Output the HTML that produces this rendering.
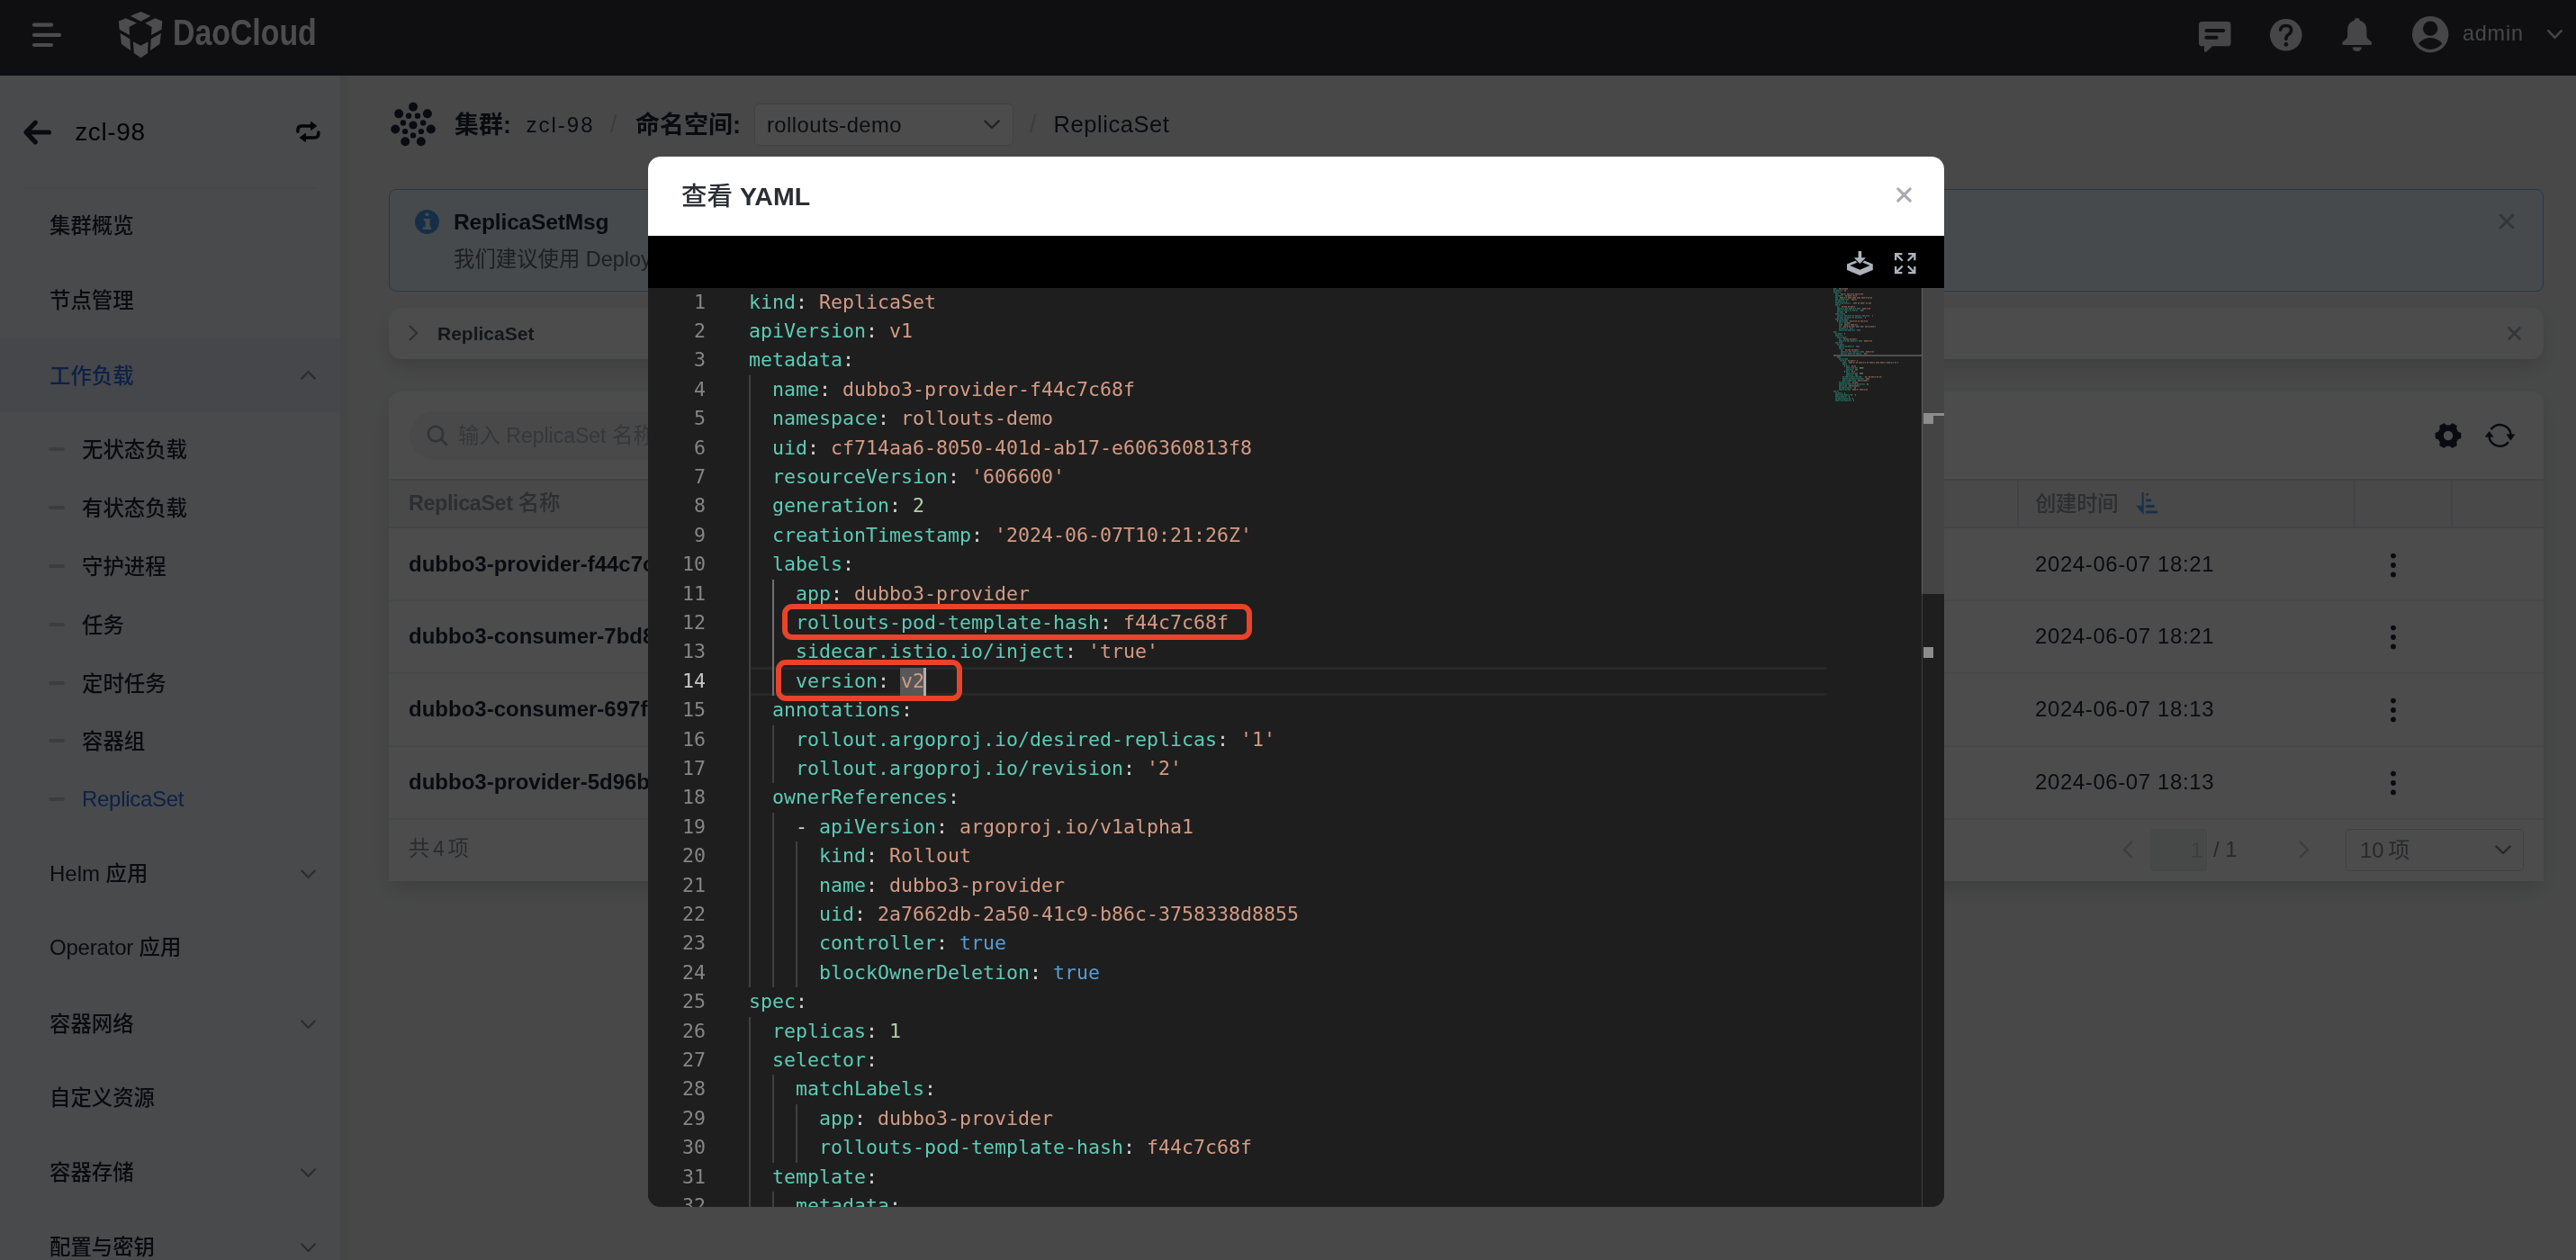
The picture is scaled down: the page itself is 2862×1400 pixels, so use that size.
<!DOCTYPE html>
<html lang="zh-CN">
<head>
<meta charset="utf-8">
<title>ReplicaSet - 查看 YAML</title>
<style>
*{box-sizing:border-box;margin:0;padding:0}
html,body{width:2862px;height:1400px;overflow:hidden;background:#f2f4f7}
body{position:relative;font-family:"Liberation Sans","Noto Sans CJK SC",sans-serif;color:#1f2738;-webkit-font-smoothing:antialiased}
.abs{position:absolute}
.t{position:absolute;white-space:nowrap;line-height:1;transform:translateY(-50%)}
svg{position:absolute;overflow:visible}
/* header */
#hdr{will-change:transform;position:absolute;left:0;top:0;width:2862px;height:84px;background:#32353f}
/* sidebar */
#side{will-change:transform;position:absolute;left:0;top:84px;width:378px;height:1316px;background:#f4f7fc;box-shadow:2px 0 10px rgba(0,0,0,.10)}
#main{will-change:transform;position:absolute;left:378px;top:84px;width:2484px;height:1316px;background:#f0f1f2}
.mi{position:absolute;left:55px;font-size:23.4px;font-weight:500;margin-top:1.5px;white-space:nowrap;line-height:1;transform:translateY(-50%);color:#1f2738}
.si{position:absolute;left:91px;font-size:23.4px;font-weight:500;margin-top:1.5px;white-space:nowrap;line-height:1;transform:translateY(-50%);color:#1f2738}
.dash{position:absolute;left:54px;width:18px;height:4px;border-radius:2px;background:#c9cdd4;transform:translateY(-50%)}
.card{position:absolute;background:#fff;border-radius:14px;box-shadow:0 10px 22px -3px rgba(0,0,0,.15)}
.hl{position:absolute;height:1.6px;background:#e2e4e9}
.hl.r{background:#eff0f2}
.vl{position:absolute;width:1.6px;background:#e0e2e7}
.rt{position:absolute;white-space:nowrap;line-height:1;transform:translateY(-50%);font-size:23.4px}
#ov{position:absolute;left:0;top:0;width:2862px;height:1400px;background:rgba(0,0,0,.7)}
/* modal */
#modal{position:absolute;left:720px;top:174px;width:1440px;height:1167px;border-radius:14px;overflow:hidden;background:#1e1e1e}
#mtitle{will-change:transform;position:absolute;left:0;top:0;width:1440px;height:88px;background:#fff}
#mtool{position:absolute;left:0;top:88px;width:1440px;height:58px;background:#000}
#ed{will-change:transform;position:absolute;left:0;top:146px;width:1440px;height:1021px;background:#1e1e1e;overflow:hidden;font-family:"DejaVu Sans Mono","Liberation Mono",monospace;font-size:21.6px;line-height:32.4px}
.ln{position:absolute;left:0;width:64px;text-align:right;color:#858585;height:32.4px;white-space:pre}
.ln.act{color:#c6c6c6}
.cl{position:absolute;left:112px;height:32.4px;white-space:pre;color:#d4d4d4}
.k{color:#5ccbb5}.s{color:#d39a83}.n{color:#b5cea8}.b{color:#569cd6}
.g{position:absolute;width:1.5px;background:#404040}
.g.a{background:#707070}
</style>
</head>
<body>
<div id="hdr">
  <svg style="left:36px;top:24px" width="34" height="30" viewBox="0 0 34 30"><g stroke="#fff" stroke-width="4.2" stroke-linecap="round"><path d="M2 3.7H21"/><path d="M2 14.9H30"/><path d="M2 26H21"/></g></svg>
  <svg style="left:125px;top:5px" width="65" height="67" viewBox="0 0 65 67"><g fill="#fff">
    <path d="M31.4 7.9L42.6 12.8L31.4 18.7L19.8 12.8Z"/>
    <path d="M6.9 18.4L14.9 15.2L26.9 20.5L18.6 24.9L19 34L7.7 27.7Z"/>
    <path d="M55.3 18.4L47.3 15.2L36.2 20.7L43.6 25L43.1 34L54.5 27.7Z"/>
    <path d="M8.5 31.9L19.4 38.2L20.1 51.1L10 43.9Z"/>
    <path d="M22.9 41.2L31.4 45.7L39.6 41.2L39.1 54L31.4 59.3L23.9 54Z"/>
    <path d="M54 31.9L42.8 38.2L42 51.1L52.4 43.9Z"/>
  </g></svg>
  <div class="t" id="logo" style="left:192px;top:36.6px;font-size:39.8px;font-weight:700;color:#fff;transform-origin:0 50%;transform:translateY(-50%) scaleX(.85)">DaoCloud</div>
  <!-- right icons -->
  <svg style="left:2442.8px;top:24px" width="35.5" height="33.8" viewBox="0 0 35.5 33.8"><path fill="#e9ebf0" d="M3.4 0H32.1Q35.5 0 35.5 3.4V23.9Q35.5 27.3 32.1 27.3H15.2L8.6 33.2Q6 34.6 5.9 32V27.3H3.4Q0 27.3 0 23.9V3.4Q0 0 3.4 0Z"/><g stroke="#32353f" stroke-width="4" stroke-linecap="round"><path d="M8.4 9.9H27.2"/><path d="M8.4 17.7H19.6"/></g></svg>
  <svg style="left:2522px;top:20.7px" width="35.6" height="35.6" viewBox="0 0 35.6 35.6"><circle cx="17.8" cy="17.8" r="17.8" fill="#e9ebf0"/><path d="M11.6 12.2Q12.6 7.6 17.9 7.6Q23.6 7.6 23.6 12.6Q23.6 15.4 20.6 17.4Q17.8 19.2 17.8 22.6" fill="none" stroke="#32353f" stroke-width="3.5" stroke-linecap="round"/><circle cx="17.9" cy="28.3" r="2.4" fill="#32353f"/></svg>
  <svg style="left:2602.4px;top:20.2px" width="33.5" height="37.3" viewBox="0 0 35 38" preserveAspectRatio="none"><path fill="#e9ebf0" d="M17.5 0Q20.4 0 20.7 2.9Q28.6 5.2 28.6 14V20.5Q28.6 23.6 33.6 26.6Q35.2 27.8 34.6 29.4Q34.1 30.6 32.6 30.6H2.4Q.9 30.6 .4 29.4Q-.2 27.8 1.4 26.6Q6.4 23.6 6.4 20.5V14Q6.4 5.2 14.3 2.9Q14.6 0 17.5 0Z"/><path fill="#e9ebf0" d="M12 33.2H23Q22 37.8 17.5 37.8Q13 37.8 12 33.2Z"/></svg>
  <svg style="left:2679.8px;top:17.9px" width="40.4" height="40.4" viewBox="0 0 40.4 40.4"><defs><clipPath id="avc"><circle cx="20.2" cy="20.2" r="16.7"/></clipPath></defs><circle cx="20.2" cy="20.2" r="20.2" fill="#e9ebf0"/><circle cx="20.2" cy="13.6" r="8.2" fill="#32353f"/><circle cx="20.2" cy="41.1" r="17" fill="#32353f" clip-path="url(#avc)"/></svg>
  <div class="t" id="admin" style="left:2736px;top:38px;font-size:23.4px;color:#e9ebf0;letter-spacing:.8px">admin</div>
  <svg style="left:2830px;top:33px" width="17" height="11" viewBox="0 0 17 11"><path d="M1.2 1.2L8.5 8.8L15.8 1.2" fill="none" stroke="#e9ebf0" stroke-width="2.4" stroke-linecap="round" stroke-linejoin="round"/></svg>
</div>
<div id="side">
  <!-- coordinates inside #side are page y minus 84 -->
  <svg style="left:26px;top:48.75px" width="31" height="28" viewBox="0 0 31 28"><path d="M13.3 3.2L2.9 14L13.3 24.9M3.4 14H28.4" fill="none" stroke="#1f2738" stroke-width="5.2" stroke-linecap="round" stroke-linejoin="round"/></svg>
  <div class="t" id="sb-title" style="left:83.2px;top:63px;font-size:28px;letter-spacing:.65px;color:#0c0d10">zcl-98</div>
  <svg style="left:328.6px;top:51.2px" width="27" height="24" viewBox="0 0 27 24"><g fill="none" stroke="#111" stroke-width="3.5" stroke-linecap="round" stroke-linejoin="round"><path d="M1.9 11.2V9.4Q1.9 4.9 6.4 4.9H17"/><path d="M24.8 11.9V13.4Q24.8 17.9 20.3 17.9H10"/></g><path fill="#111" stroke="#111" stroke-width="1" stroke-linejoin="round" d="M16.6 .4L22.8 4.9L16.6 9.5Z M10.4 13.3L4.2 17.9L10.4 22.5Z"/></svg>
  <div class="hl" style="left:27px;top:124px;width:324px;background:#e9ebef"></div>
  <div class="mi" style="top:166px">集群概览</div>
  <div class="mi" style="top:249px">节点管理</div>
  <div class="abs" style="left:0;top:292px;width:378px;height:82px;background:#e9edf7"></div>
  <div class="mi" style="top:333px;color:#2a70ef">工作负载</div>
  <svg style="left:334px;top:327px" width="17" height="11" viewBox="0 0 17 11"><path d="M1.2 9.6L8.5 2L15.8 9.6" fill="none" stroke="#8d939d" stroke-width="2.2" stroke-linecap="round" stroke-linejoin="round"/></svg>
  <div class="dash" style="top:415px"></div><div class="si" style="top:415px">无状态负载</div>
  <div class="dash" style="top:480px"></div><div class="si" style="top:480px">有状态负载</div>
  <div class="dash" style="top:545px"></div><div class="si" style="top:545px">守护进程</div>
  <div class="dash" style="top:610px"></div><div class="si" style="top:610px">任务</div>
  <div class="dash" style="top:675px"></div><div class="si" style="top:675px">定时任务</div>
  <div class="dash" style="top:739px"></div><div class="si" style="top:739px">容器组</div>
  <div class="dash" style="top:804px"></div><div class="si" id="sb-rs" style="margin-top:0;top:803.6px;color:#2a70ef;font-size:24px;letter-spacing:-.3px">ReplicaSet</div>
  <div class="mi" id="sb-helm" style="top:885px"><span style="font-size:24px;letter-spacing:0px">Helm</span> 应用</div>
  <svg style="left:334px;top:882px" width="17" height="11" viewBox="0 0 17 11"><path d="M1.2 1.4L8.5 9L15.8 1.4" fill="none" stroke="#8d939d" stroke-width="2.2" stroke-linecap="round" stroke-linejoin="round"/></svg>
  <div class="mi" id="sb-op" style="top:967.5px"><span style="font-size:24px;letter-spacing:-.2px">Operator</span> 应用</div>
  <div class="mi" style="top:1053px">容器网络</div>
  <svg style="left:334px;top:1048.5px" width="17" height="11" viewBox="0 0 17 11"><path d="M1.2 1.4L8.5 9L15.8 1.4" fill="none" stroke="#8d939d" stroke-width="2.2" stroke-linecap="round" stroke-linejoin="round"/></svg>
  <div class="mi" style="top:1135px">自定义资源</div>
  <div class="mi" style="top:1218px">容器存储</div>
  <svg style="left:334px;top:1213.5px" width="17" height="11" viewBox="0 0 17 11"><path d="M1.2 1.4L8.5 9L15.8 1.4" fill="none" stroke="#8d939d" stroke-width="2.2" stroke-linecap="round" stroke-linejoin="round"/></svg>
  <div class="mi" style="top:1301px">配置与密钥</div>
  <svg style="left:334px;top:1296.5px" width="17" height="11" viewBox="0 0 17 11"><path d="M1.2 1.4L8.5 9L15.8 1.4" fill="none" stroke="#8d939d" stroke-width="2.2" stroke-linecap="round" stroke-linejoin="round"/></svg>
</div>
<div id="main">
  <div class="abs" style="left:0;top:0;width:14px;height:1316px;background:linear-gradient(90deg,rgba(0,0,0,.05),rgba(0,0,0,0))"></div>
  <!-- breadcrumb -->
  <svg id="clu" style="left:55.9px;top:29.6px" width="50" height="50" viewBox="-25 -25 50 50"><g fill="#1f2738"><circle r="4.6"/><circle cx="0.00" cy="11.40" r="3.2"/><circle cx="-8.91" cy="7.11" r="3.2"/><circle cx="-11.11" cy="-2.54" r="3.2"/><circle cx="-4.95" cy="-10.27" r="3.2"/><circle cx="4.95" cy="-10.27" r="3.2"/><circle cx="11.11" cy="-2.54" r="3.2"/><circle cx="8.91" cy="7.11" r="3.2"/><circle cx="0.00" cy="-20.30" r="5"/><circle cx="15.87" cy="-12.66" r="5"/><circle cx="19.79" cy="4.52" r="5"/><circle cx="8.81" cy="18.29" r="5"/><circle cx="-8.81" cy="18.29" r="5"/><circle cx="-19.79" cy="4.52" r="5"/><circle cx="-15.87" cy="-12.66" r="5"/></g></svg>
  <div class="t" id="bc1" style="left:127px;top:55.2px;font-size:27px;font-weight:700">集群:</div>
  <div class="t" id="bc2" style="left:206.5px;top:54.6px;font-size:24px;letter-spacing:2px">zcl-98</div>
  <div class="t" style="left:300px;top:54px;font-size:27px;color:#c8c9cf">/</div>
  <div class="t" id="bc3" style="left:328px;top:55.2px;font-size:27px;font-weight:700">命名空间:</div>
  <div class="abs" style="left:460px;top:31px;width:288px;height:47px;border:1.8px solid #d2d6de;border-radius:5px;background:#fff"></div>
  <div class="t" id="bc4" style="left:474px;top:55px;font-size:23.8px;letter-spacing:.45px;color:#2a2f38">rollouts-demo</div>
  <svg style="left:715px;top:49px" width="18" height="11" viewBox="0 0 18 11"><path d="M1.2 1.4L9 9L16.8 1.4" fill="none" stroke="#6b717c" stroke-width="2.2" stroke-linecap="round" stroke-linejoin="round"/></svg>
  <div class="t" style="left:766px;top:54px;font-size:27px;color:#c8c9cf">/</div>
  <div class="t" id="bc5" style="left:792.5px;top:54.9px;font-size:25.5px;letter-spacing:.57px">ReplicaSet</div>

  <!-- alert -->
  <div class="abs" style="left:54px;top:126px;width:2394px;height:114px;border:1.6px solid #8ab8ee;border-radius:8px;background:#ecf7fd"></div>
  <svg style="left:82.9px;top:148.9px" width="27" height="27" viewBox="-13.5 -13.5 27 27"><circle r="13.45" fill="#4a9ff5"/><g fill="#ecf7fd"><circle cx="0" cy="-8.15" r="1.9"/><path d="M-3.7 -3.6H3V5.65H4.5V8.4H-4.6V5.65H-1.85V-.9H-3.7Z"/></g></svg>
  <div class="t" id="al1" style="left:126px;top:163px;font-size:24.6px;font-weight:700;letter-spacing:-.2px;color:#1f2738">ReplicaSetMsg</div>
  <div class="t" id="al2" style="left:126px;top:204.5px;font-size:23.4px;color:#64676e">我们建议使用 Deployment 来自动管理 ReplicaSet，除非您需要自定义更新业务流程或根本不需要更新。</div>
  <svg style="left:2398px;top:153px" width="18" height="18" viewBox="0 0 18 18"><path d="M2 2L16 16M16 2L2 16" stroke="#aeb3be" stroke-width="3" stroke-linecap="round"/></svg>

  <!-- collapsed card -->
  <div class="card" style="left:54px;top:258px;width:2394px;height:57px"></div>
  <svg style="left:76px;top:277px" width="11" height="18" viewBox="0 0 11 18"><path d="M1.5 1.5L9.2 9L1.5 16.5" fill="none" stroke="#9a9fa8" stroke-width="2.1" stroke-linecap="round" stroke-linejoin="round"/></svg>
  <div class="t" id="cc1" style="left:108px;top:286px;font-size:21px;font-weight:700;letter-spacing:0;color:#474c55">ReplicaSet</div>
  <svg style="left:2408px;top:279px" width="15" height="15" viewBox="0 0 15 15"><path d="M1.6 1.6L13.4 13.4M13.4 1.6L1.6 13.4" stroke="#aeb3be" stroke-width="2.8" stroke-linecap="round"/></svg>

  <!-- table card -->
  <div class="card" style="left:54px;top:351px;width:2394px;height:544px;border-radius:14px 14px 0 0"></div>
  <div class="abs" style="left:76.7px;top:373.2px;width:560px;height:54px;border-radius:27px;background:#f3f5f8"></div>
  <svg style="left:96px;top:388px" width="24" height="24" viewBox="0 0 24 24"><circle cx="10" cy="10" r="8.2" fill="none" stroke="#a6abb4" stroke-width="2.6"/><path d="M16 16L22 22" stroke="#a6abb4" stroke-width="2.8" stroke-linecap="round"/></svg>
  <div class="t" id="sp" style="left:131px;top:401px;font-size:23.4px;color:#b4b8c0;letter-spacing:0">输入 <span id="spl" style="font-size:23px">ReplicaSet</span> 名称搜索</div>
  <svg id="gear" style="left:2326.5px;top:385px" width="30" height="30" viewBox="-15 -15 30 30"><path fill="#1f2738" stroke="#1f2738" stroke-width="1.8" stroke-linejoin="round" fill-rule="evenodd" d="M10.31,-3.55 L13.47,-2.50 L13.47,2.50 L10.31,3.55 A10.9,10.9 0 0 1 8.23,7.15 L8.23,7.15 L8.90,10.42 L4.57,12.91 L2.08,10.70 A10.9,10.9 0 0 1 -2.08,10.70 L-2.08,10.70 L-4.57,12.91 L-8.90,10.42 L-8.23,7.15 A10.9,10.9 0 0 1 -10.31,3.55 L-10.31,3.55 L-13.47,2.50 L-13.47,-2.50 L-10.31,-3.55 A10.9,10.9 0 0 1 -8.23,-7.15 L-8.23,-7.15 L-8.90,-10.42 L-4.57,-12.91 L-2.08,-10.70 A10.9,10.9 0 0 1 2.08,-10.70 L2.08,-10.70 L4.57,-12.91 L8.90,-10.42 L8.23,-7.15 A10.9,10.9 0 0 1 10.31,-3.55 Z M0,-6.1 A6.1,6.1 0 1 0 0,6.1 A6.1,6.1 0 1 0 0,-6.1Z"/></svg>
  <svg id="refr" style="left:2382.9px;top:384.6px" width="33" height="30" viewBox="-16.5 -15 33 30"><g fill="none" stroke="#1f2738" stroke-width="2.5" stroke-linecap="round"><path d="M-9.3,-7.6 A12.1,12.1 0 0 1 12.05,-1"/><path d="M8.8,7.9 A12.1,12.1 0 0 1 -12.05,1.2"/></g><path fill="#1f2738" stroke="#1f2738" stroke-width=".8" stroke-linejoin="round" d="M7.6,-1.2 L16.2,-1.2 L11.9,5.2Z M-16.2,1.2 L-7.6,1.2 L-11.9,-4.6Z"/></svg>
  <div class="abs" style="left:54px;top:449px;width:2394px;height:53px;background:#f6f6f7"></div>
  <div class="hl" style="left:54px;top:448px;width:2394px"></div>
  <div class="hl" style="left:54px;top:501px;width:2394px"></div>
  <div class="hl r" style="left:54px;top:582px;width:2394px"></div>
  <div class="hl r" style="left:54px;top:663px;width:2394px"></div>
  <div class="hl r" style="left:54px;top:744px;width:2394px"></div>
  <div class="hl r" style="left:54px;top:825px;width:2394px"></div>
  <div class="vl" style="left:1863px;top:449px;height:53px"></div>
  <div class="vl" style="left:2237px;top:449px;height:53px"></div>
  <div class="vl" style="left:2345px;top:449px;height:53px"></div>
  <div class="rt" id="th1" style="left:76px;top:476px;color:#9499a2;font-weight:700;letter-spacing:-.4px">ReplicaSet <span style="font-weight:500;letter-spacing:0">名称</span></div>
  <div class="rt" id="th2" style="left:1883px;top:476.5px;color:#9499a2;font-weight:500;letter-spacing:-.3px">创建时间</div>
  <svg style="left:1994px;top:462px" width="26" height="27" viewBox="0 0 26 27"><g fill="#4da3fa"><path d="M7.6 1H9.7V26L1 15.8H7.6Z"/><circle cx="13.6" cy="3.4" r="1.45"/><rect x="11.8" y="8.5" width="6.7" height="2.8" rx="1.4"/><rect x="11.8" y="15.1" width="10.2" height="2.8" rx="1.4"/><rect x="11.8" y="21.5" width="13.7" height="2.9" rx="1.4"/></g></svg>
  <div class="rt rn" id="rn1" style="left:76px;top:543px;font-weight:700;letter-spacing:0;font-size:24px">dubbo3-provider-f44c7c68f</div>
  <div class="rt rd" id="rd1" style="left:1883px;top:543px;letter-spacing:.6px;font-size:24px">2024-06-07 18:21</div>
  <svg style="left:2277px;top:530px" width="8" height="28" viewBox="0 0 8 28"><g fill="#1f2738"><circle cx="4" cy="3.6" r="2.9"/><circle cx="4" cy="14" r="2.9"/><circle cx="4" cy="24.4" r="2.9"/></g></svg>
  <div class="rt rn" style="left:76px;top:623px;font-weight:700;letter-spacing:0;font-size:24px">dubbo3-consumer-7bd8f5d9c4</div>
  <div class="rt rd" style="left:1883px;top:623px;letter-spacing:.6px;font-size:24px">2024-06-07 18:21</div>
  <svg style="left:2277px;top:610px" width="8" height="28" viewBox="0 0 8 28"><g fill="#1f2738"><circle cx="4" cy="3.6" r="2.9"/><circle cx="4" cy="14" r="2.9"/><circle cx="4" cy="24.4" r="2.9"/></g></svg>
  <div class="rt rn" style="left:76px;top:704px;font-weight:700;letter-spacing:0;font-size:24px">dubbo3-consumer-697fb8c6b7</div>
  <div class="rt rd" style="left:1883px;top:704px;letter-spacing:.6px;font-size:24px">2024-06-07 18:13</div>
  <svg style="left:2277px;top:691px" width="8" height="28" viewBox="0 0 8 28"><g fill="#1f2738"><circle cx="4" cy="3.6" r="2.9"/><circle cx="4" cy="14" r="2.9"/><circle cx="4" cy="24.4" r="2.9"/></g></svg>
  <div class="rt rn" style="left:76px;top:785px;font-weight:700;letter-spacing:0;font-size:24px">dubbo3-provider-5d96bf4c9d</div>
  <div class="rt rd" style="left:1883px;top:785px;letter-spacing:.6px;font-size:24px">2024-06-07 18:13</div>
  <svg style="left:2277px;top:772px" width="8" height="28" viewBox="0 0 8 28"><g fill="#1f2738"><circle cx="4" cy="3.6" r="2.9"/><circle cx="4" cy="14" r="2.9"/><circle cx="4" cy="24.4" r="2.9"/></g></svg>
  <div class="rt" id="ft1" style="left:76px;top:860px;color:#8d939d;letter-spacing:0;word-spacing:-3px">共 4 项</div>
  <svg style="left:1980px;top:850px" width="12" height="20" viewBox="0 0 12 20"><path d="M10.3 1.6L2 10L10.3 18.4" fill="none" stroke="#c4c8cf" stroke-width="2.3" stroke-linecap="round" stroke-linejoin="round"/></svg>
  <div class="abs" style="left:2011px;top:837px;width:63px;height:46.5px;border-radius:5px;background:#eff0f2;border:1.6px solid #e5e7ea"></div>
  <div class="rt" style="left:2056px;top:861px;color:#c8ccd2;font-size:24px">1</div>
  <div class="rt" id="ft2" style="left:2081px;top:860px;color:#868a91;font-size:24px;letter-spacing:0">/ 1</div>
  <svg style="left:2176px;top:850px" width="12" height="20" viewBox="0 0 12 20"><path d="M1.7 1.6L10 10L1.7 18.4" fill="none" stroke="#c4c8cf" stroke-width="2.3" stroke-linecap="round" stroke-linejoin="round"/></svg>
  <div class="abs" style="left:2228px;top:837px;width:198px;height:47px;border:1.8px solid #d5d8de;border-radius:5px;background:#fff"></div>
  <div class="rt" id="ft3" style="left:2244px;top:861px;color:#868a91;font-size:24px;letter-spacing:0;word-spacing:-2px">10 项</div>
  <svg style="left:2394px;top:855px" width="18" height="11" viewBox="0 0 18 11"><path d="M1.3 1.4L9 9L16.7 1.4" fill="none" stroke="#7c8088" stroke-width="2.2" stroke-linecap="round" stroke-linejoin="round"/></svg>
</div>
<div id="ov"></div>
<div id="modal">
 <div id="mtitle"><div class="t" id="mt" style="left:37px;top:44.4px;font-size:28.5px;font-weight:700;color:#2a2d33;letter-spacing:0"><span style="font-weight:500">查看</span> YAML</div>
  <svg style="left:1385.5px;top:33.4px" width="19" height="19" viewBox="0 0 19 19"><path d="M2.8 2.8L16.2 16.2M16.2 2.8L2.8 16.2" stroke="#a6abb5" stroke-width="3.1" stroke-linecap="round"/></svg></div>
 <div id="mtool">
  <svg style="left:1332px;top:17px" width="28.8" height="27.2" viewBox="0 0 28.8 27.2"><path fill="#adb2bc" fill-rule="evenodd" d="M0 14.5L14.4 8.4L28.8 14.5V21.1L14.4 27.1L0 21.1Z M3.3 16.1L14.4 11.4L25.5 16.1L14.4 20.8Z"/><path d="M7.8 7.2H21L14.4 14Z" fill="#adb2bc" stroke="#000" stroke-width="2.3" paint-order="stroke" stroke-linejoin="miter"/><rect x="12.6" y="0" width="3.6" height="8" fill="#adb2bc"/></svg>
  <svg style="left:1385.2px;top:18.8px" width="23.5" height="23.2" viewBox="0 0 23.5 23.5" preserveAspectRatio="none"><g fill="none" stroke="#adb2bc" stroke-width="2.3" stroke-linejoin="miter"><path d="M1.15 8.4V1.15H8.4M1.6 1.6L8.8 8.8"/><path d="M22.35 8.4V1.15H15.1M21.9 1.6L14.7 8.8"/><path d="M1.15 15.1V22.35H8.4M1.6 21.9L8.8 14.7"/><path d="M22.35 15.1V22.35H15.1M21.9 21.9L14.7 14.7"/></g></svg>
 </div>
 <div id="ed">
  <div class="abs" style="left:113px;top:420.8px;width:1196px;height:32.4px;border-top:3.2px solid #282828;border-bottom:3.2px solid #282828"></div>
  <div class="abs" style="left:280.1px;top:421.8px;width:26.0px;height:31.0px;background:#575757"></div>
  <div class="g" style="left:112.0px;top:96.8px;height:680.4px"></div>
  <div class="g" style="left:112.0px;top:809.6px;height:226.8px"></div>
  <div class="g a" style="left:138.0px;top:323.6px;height:129.6px"></div>
  <div class="g" style="left:138.0px;top:485.6px;height:64.8px"></div>
  <div class="g" style="left:138.0px;top:582.8px;height:194.4px"></div>
  <div class="g" style="left:164.0px;top:615.2px;height:162.0px"></div>
  <div class="g" style="left:138.0px;top:874.4px;height:97.2px"></div>
  <div class="g" style="left:164.0px;top:906.8px;height:64.8px"></div>
  <div class="g" style="left:138.0px;top:1004.0px;height:32.4px"></div>
  <div class="ln" style="top:-0.4px">1</div>
  <div class="cl" style="top:-0.4px"><span class="k">kind</span>: <span class="s">ReplicaSet</span></div>
  <div class="ln" style="top:32.0px">2</div>
  <div class="cl" style="top:32.0px"><span class="k">apiVersion</span>: <span class="s">v1</span></div>
  <div class="ln" style="top:64.4px">3</div>
  <div class="cl" style="top:64.4px"><span class="k">metadata</span>:</div>
  <div class="ln" style="top:96.8px">4</div>
  <div class="cl" style="top:96.8px">  <span class="k">name</span>: <span class="s">dubbo3-provider-f44c7c68f</span></div>
  <div class="ln" style="top:129.2px">5</div>
  <div class="cl" style="top:129.2px">  <span class="k">namespace</span>: <span class="s">rollouts-demo</span></div>
  <div class="ln" style="top:161.6px">6</div>
  <div class="cl" style="top:161.6px">  <span class="k">uid</span>: <span class="s">cf714aa6-8050-401d-ab17-e606360813f8</span></div>
  <div class="ln" style="top:194.0px">7</div>
  <div class="cl" style="top:194.0px">  <span class="k">resourceVersion</span>: <span class="s">&#x27;606600&#x27;</span></div>
  <div class="ln" style="top:226.4px">8</div>
  <div class="cl" style="top:226.4px">  <span class="k">generation</span>: <span class="n">2</span></div>
  <div class="ln" style="top:258.8px">9</div>
  <div class="cl" style="top:258.8px">  <span class="k">creationTimestamp</span>: <span class="s">&#x27;2024-06-07T10:21:26Z&#x27;</span></div>
  <div class="ln" style="top:291.2px">10</div>
  <div class="cl" style="top:291.2px">  <span class="k">labels</span>:</div>
  <div class="ln" style="top:323.6px">11</div>
  <div class="cl" style="top:323.6px">    <span class="k">app</span>: <span class="s">dubbo3-provider</span></div>
  <div class="ln" style="top:356.0px">12</div>
  <div class="cl" style="top:356.0px">    <span class="k">rollouts-pod-template-hash</span>: <span class="s">f44c7c68f</span></div>
  <div class="ln" style="top:388.4px">13</div>
  <div class="cl" style="top:388.4px">    <span class="k">sidecar.istio.io/inject</span>: <span class="s">&#x27;true&#x27;</span></div>
  <div class="ln act" style="top:420.8px">14</div>
  <div class="cl" style="top:420.8px">    <span class="k">version</span>: <span class="s">v2</span></div>
  <div class="ln" style="top:453.2px">15</div>
  <div class="cl" style="top:453.2px">  <span class="k">annotations</span>:</div>
  <div class="ln" style="top:485.6px">16</div>
  <div class="cl" style="top:485.6px">    <span class="k">rollout.argoproj.io/desired-replicas</span>: <span class="s">&#x27;1&#x27;</span></div>
  <div class="ln" style="top:518.0px">17</div>
  <div class="cl" style="top:518.0px">    <span class="k">rollout.argoproj.io/revision</span>: <span class="s">&#x27;2&#x27;</span></div>
  <div class="ln" style="top:550.4px">18</div>
  <div class="cl" style="top:550.4px">  <span class="k">ownerReferences</span>:</div>
  <div class="ln" style="top:582.8px">19</div>
  <div class="cl" style="top:582.8px">    - <span class="k">apiVersion</span>: <span class="s">argoproj.io/v1alpha1</span></div>
  <div class="ln" style="top:615.2px">20</div>
  <div class="cl" style="top:615.2px">      <span class="k">kind</span>: <span class="s">Rollout</span></div>
  <div class="ln" style="top:647.6px">21</div>
  <div class="cl" style="top:647.6px">      <span class="k">name</span>: <span class="s">dubbo3-provider</span></div>
  <div class="ln" style="top:680.0px">22</div>
  <div class="cl" style="top:680.0px">      <span class="k">uid</span>: <span class="s">2a7662db-2a50-41c9-b86c-3758338d8855</span></div>
  <div class="ln" style="top:712.4px">23</div>
  <div class="cl" style="top:712.4px">      <span class="k">controller</span>: <span class="b">true</span></div>
  <div class="ln" style="top:744.8px">24</div>
  <div class="cl" style="top:744.8px">      <span class="k">blockOwnerDeletion</span>: <span class="b">true</span></div>
  <div class="ln" style="top:777.2px">25</div>
  <div class="cl" style="top:777.2px"><span class="k">spec</span>:</div>
  <div class="ln" style="top:809.6px">26</div>
  <div class="cl" style="top:809.6px">  <span class="k">replicas</span>: <span class="n">1</span></div>
  <div class="ln" style="top:842.0px">27</div>
  <div class="cl" style="top:842.0px">  <span class="k">selector</span>:</div>
  <div class="ln" style="top:874.4px">28</div>
  <div class="cl" style="top:874.4px">    <span class="k">matchLabels</span>:</div>
  <div class="ln" style="top:906.8px">29</div>
  <div class="cl" style="top:906.8px">      <span class="k">app</span>: <span class="s">dubbo3-provider</span></div>
  <div class="ln" style="top:939.2px">30</div>
  <div class="cl" style="top:939.2px">      <span class="k">rollouts-pod-template-hash</span>: <span class="s">f44c7c68f</span></div>
  <div class="ln" style="top:971.6px">31</div>
  <div class="cl" style="top:971.6px">  <span class="k">template</span>:</div>
  <div class="ln" style="top:1004.0px">32</div>
  <div class="cl" style="top:1004.0px">    <span class="k">metadata</span>:</div>
  <div class="abs" style="left:306.1px;top:421.8px;width:3.4px;height:31.0px;background:#aeafad"></div>
  <div class="abs" style="left:149px;top:350.8px;width:522px;height:40.4px;border:6.2px solid #e8432b;border-radius:11px"></div>
  <div class="abs" style="left:141.5px;top:413.2px;width:207px;height:46px;border:6.2px solid #e8432b;border-radius:11px"></div>
  <svg id="mm" style="left:1317px;top:0" width="98" height="140" viewBox="0 0 98 140" fill="none" stroke-width="1.25"><path stroke="#2d9481" opacity=".74" stroke-dasharray="3 .6 2 .6 4 .6 1 .6" d="M0 0.75h4M2 6.75h4M2 12.75h15M2 18.75h6M4 24.75h7M12 24.75h5M18 24.75h2M21 24.75h6M4 30.75h7M12 30.75h8M21 30.75h2M24 30.75h7M32 30.75h8M6 36.75h10M6 42.75h3M0 48.75h4M4 54.75h11M2 60.75h8M6 66.75h6M8 72.75h7M16 72.75h5M22 72.75h2M25 72.75h6M6 78.75h10M10 84.75h5M14 90.75h8M14 96.75h8M10 102.75h15M6 108.75h9M0 114.75h6M2 120.75h13"/><path stroke="#2d9481" opacity=".74" stroke-dasharray="2 .6 4 .6 1 .6 3 .6 2 .6" d="M0 2.75h10M2 8.75h9M2 14.75h10M4 20.75h3M4 26.75h7M4 32.75h7M12 32.75h8M21 32.75h2M24 32.75h8M6 38.75h4M6 44.75h10M2 50.75h8M6 56.75h3M4 62.75h8M8 68.75h3M8 74.75h7M10 80.75h4M14 86.75h4M14 92.75h4M10 98.75h22M6 104.75h13M6 110.75h15M2 116.75h8M2 122.75h17"/><path stroke="#2d9481" opacity=".74" stroke-dasharray="4 .6 1.4 .6 2.6 .6" d="M0 4.75h8M2 10.75h3M2 16.75h17M4 22.75h8M13 22.75h3M17 22.75h8M26 22.75h4M2 28.75h11M2 34.75h15M6 40.75h4M6 46.75h18M2 52.75h8M6 58.75h8M15 58.75h3M19 58.75h8M28 58.75h4M6 64.75h17M8 70.75h8M17 70.75h3M21 70.75h8M30 70.75h4M4 76.75h4M10 82.75h5M14 88.75h13M14 94.75h13M10 100.75h24M6 106.75h29M6 112.75h13M2 118.75h20M2 124.75h18"/><path stroke="#a8796a" opacity=".74" stroke-dasharray="3 .6 2 .6 4 .6 1 .6" d="M6 0.75h10M8 6.75h6M15 6.75h8M24 6.75h9M20 12.75h6M30 24.75h4M43 30.75h1M18 36.75h8M27 36.75h2M30 36.75h8M11 42.75h8M20 42.75h4M25 42.75h4M30 42.75h4M35 42.75h12M34 72.75h4M24 90.75h3M24 96.75h3M27 102.75h12M17 108.75h12"/><path stroke="#a8796a" opacity=".74" stroke-dasharray="2 .6 4 .6 1 .6 3 .6 2 .6" d="M12 2.75h2M13 8.75h8M22 8.75h4M9 20.75h6M16 20.75h8M13 26.75h2M35 32.75h1M12 38.75h7M11 56.75h6M18 56.75h8M13 68.75h6M20 68.75h8M17 74.75h2M16 80.75h9M26 80.75h1M20 86.75h5M20 92.75h4M35 98.75h3M39 98.75h11M51 98.75h3M21 104.75h6M23 110.75h2"/><path stroke="#a8796a" opacity=".74" stroke-dasharray="4 .6 1.4 .6 2.6 .6" d="M7 10.75h8M16 10.75h4M21 10.75h4M26 10.75h4M31 10.75h12M22 16.75h4M27 16.75h2M30 16.75h5M36 16.75h2M39 16.75h3M32 22.75h9M12 40.75h6M19 40.75h8M34 58.75h9M36 70.75h9M17 82.75h7M25 82.75h2M28 82.75h8M37 82.75h2M40 82.75h6M47 82.75h4M52 82.75h6M59 82.75h8M68 82.75h2M71 82.75h1M36 100.75h4M21 112.75h7M29 112.75h9"/><path stroke="#95a888" opacity=".74" stroke-dasharray="3 .6 2 .6 4 .6 1 .6" d="M17 120.75h1"/><path stroke="#95a888" opacity=".74" stroke-dasharray="2 .6 4 .6 1 .6 3 .6 2 .6" d="M14 14.75h1M12 50.75h1M12 116.75h1M21 122.75h1"/><path stroke="#95a888" opacity=".74" stroke-dasharray="4 .6 1.4 .6 2.6 .6" d="M29 88.75h5M29 94.75h4M37 106.75h2M24 118.75h1M22 124.75h1"/><path stroke="#4a7fb8" opacity=".74" stroke-dasharray="2 .6 4 .6 1 .6 3 .6 2 .6" d="M18 44.75h4"/><path stroke="#4a7fb8" opacity=".74" stroke-dasharray="4 .6 1.4 .6 2.6 .6" d="M26 46.75h4M25 64.75h4"/><path stroke="#aaaaaa" opacity=".74" stroke-dasharray="3 .6 2 .6 4 .6 1 .6" d="M4 36.75h1"/><path stroke="#aaaaaa" opacity=".74" stroke-dasharray="2 .6 4 .6 1 .6 3 .6 2 .6" d="M8 80.75h1M12 86.75h1M12 92.75h1"/></svg>
  <div class="abs" style="left:1317px;top:74px;width:98px;height:2px;background:#4f4f4f"></div>
  <div class="abs" style="left:1415px;top:0;width:25px;height:1021px;background:#1e1e1e;border-left:1.4px solid #3c3c3c"></div>
  <div class="abs" style="left:1415px;top:0;width:25px;height:340px;background:#444;border-left:1.4px solid #5e5e5e"></div>
  <div class="abs" style="left:1417px;top:139px;width:23px;height:3px;background:#8c8c8c"></div>
  <div class="abs" style="left:1417px;top:139px;width:11px;height:12px;background:#8c8c8c"></div>
  <div class="abs" style="left:1417px;top:399px;width:11px;height:12px;background:#8c8c8c"></div>
 </div>
</div>
</body></html>
